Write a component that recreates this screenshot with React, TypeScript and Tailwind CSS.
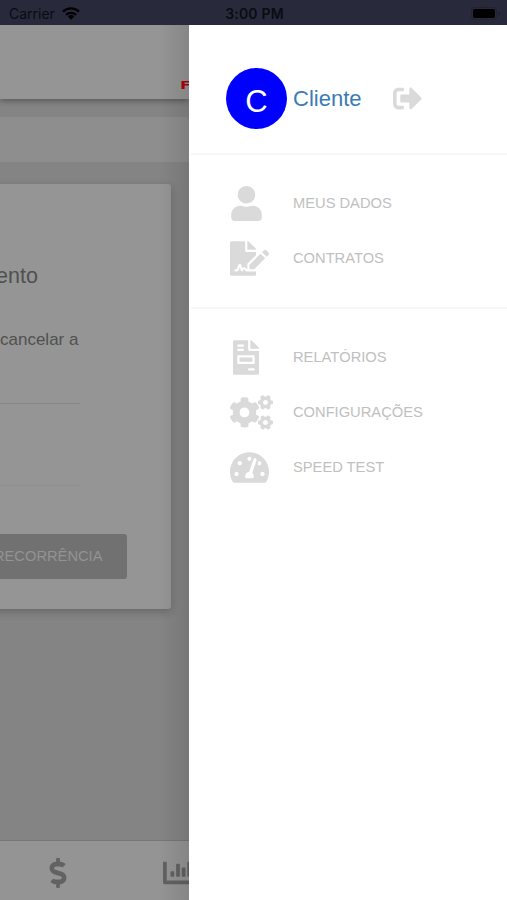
import type { IconType } from "react-icons";
import {
  FaChartBar,
  FaCogs,
  FaDollarSign,
  FaFileInvoice,
  FaFileSignature,
  FaSignOutAlt,
  FaTachometerAlt,
  FaUser,
} from "react-icons/fa";

interface MenuItem {
  label: string;
  icon: IconType;
  iconClass: string;
}

const accountItems: MenuItem[] = [
  { label: "MEUS DADOS", icon: FaUser, iconClass: "ml-px w-[31px]" },
  { label: "CONTRATOS", icon: FaFileSignature, iconClass: "w-[39px]" },
];

const toolItems: MenuItem[] = [
  { label: "RELATÓRIOS", icon: FaFileInvoice, iconClass: "ml-[3px] w-[26px]" },
  { label: "CONFIGURAÇÕES", icon: FaCogs, iconClass: "w-[43px]" },
  { label: "SPEED TEST", icon: FaTachometerAlt, iconClass: "w-[39px]" },
];

function StatusBar() {
  return (
    <header className="grid h-[25px] shrink-0 grid-cols-3 items-center bg-[#28293b] pt-[3px] pl-[9px] pr-[7px] font-['Inter',sans-serif] text-[14px] leading-none text-[#0b0b12]">
      <div className="flex items-center gap-[7px]">
        <span>Carrier</span>
        <svg width="18" height="13" viewBox="0 0 18 13" className="-mt-[2px] text-black">
          <g fill="none" stroke="currentColor" strokeWidth="2.3">
            <path d="M1 4.6a11.4 11.4 0 0 1 16 0" />
            <path d="M4 7.8a7.2 7.2 0 0 1 10 0" />
          </g>
          <path d="M9 12.7 5.8 9.6a4.7 4.7 0 0 1 6.4 0z" fill="currentColor" />
        </svg>
      </div>
      <span className="text-center font-semibold tracking-[0.2px]">3:00 PM</span>
      <svg width="29" height="13" viewBox="0 0 29 13" className="-mt-[2px] justify-self-end">
        <rect x="0.5" y="0.5" width="25" height="12" rx="3" fill="none" stroke="#212130" />
        <rect x="2" y="2" width="22" height="9" rx="1.5" fill="#000" />
        <path d="M27 4.5v4a2 2 0 0 0 0-4z" fill="#212130" />
      </svg>
    </header>
  );
}

function PageBehind() {
  return (
    <main className="relative flex w-[189px] shrink-0 flex-col overflow-hidden bg-[#848484] text-[#505050]">
      <div className="flex h-[74px] shrink-0 items-start justify-end bg-[#959595] pt-[55px] shadow-[0_2px_6px_rgba(0,0,0,0.35)]">
        <span className="w-[9px] origin-left scale-x-150 font-['DejaVu_Sans',sans-serif] text-[11px] leading-[11px] font-bold text-[#b0000d]">
          F
        </span>
      </div>
      <div className="mt-[18px] h-[45px] shrink-0 rounded-tr-sm bg-[#8e8e8e]" />
      <section className="mt-[22px] mr-[18px] -ml-[12px] flex h-[425px] shrink-0 flex-col rounded-r-[3px] bg-[#959595] pl-[12px] shadow-[0_3px_8px_rgba(0,0,0,0.22)]">
        <h2 className="-ml-[4px] mt-[79px] text-[21.5px] leading-[26px]">ento</h2>
        <p className="mt-[41px] text-[17px] leading-[20px]">cancelar a</p>
        <div className="mt-[53px] mr-[91px] border-t border-[#878787]" />
        <div className="mt-[81px] mr-[91px] border-t border-[#8f8f8f]" />
        <div className="mt-[48px] mr-[44px] flex h-[45px] items-center justify-end rounded-r-[3px] bg-[#717171] pr-[24.5px] text-[14.7px] text-[#939393]">
          RECORRÊNCIA
        </div>
      </section>
      <nav className="mt-auto flex h-[60px] shrink-0 items-center border-t border-[#777] bg-[#949494] pt-[4px] text-[#626262]">
        <FaDollarSign size={30} className="ml-[43px] shrink-0" />
        <FaChartBar size={30} className="ml-[90px] shrink-0" />
      </nav>
      <div className="absolute inset-y-0 right-0 w-[30px] bg-linear-to-r from-transparent to-black/10" />
    </main>
  );
}

function MenuRow({ label, icon: Icon, iconClass }: MenuItem) {
  return (
    <li className="flex h-[55px] items-center">
      <div className="w-[63px] shrink-0 text-[#dadada]">
        <Icon className={`h-[35px] ${iconClass}`} />
      </div>
      <span className="text-[14.7px] text-[#c0c0c0]">{label}</span>
    </li>
  );
}

function Drawer() {
  return (
    <aside className="flex flex-1 flex-col bg-white pl-[2px]">
      <div className="flex h-[130px] items-center border-b-2 border-[#f6f6f6] pt-[19px] pl-[35px]">
        <div className="flex size-[61px] items-center justify-center rounded-full bg-[#0000ff] pt-[7px] text-[31px] text-white">
          C
        </div>
        <span className="ml-[6px] text-[22px] text-[#3b7cb5]">Cliente</span>
        <FaSignOutAlt size={29} className="ml-[32px] text-[#dadada]" />
      </div>
      <ul className="border-b-2 border-[#f6f6f6] pt-[21px] pb-[21px] pl-[39px]">
        {accountItems.map((item) => (
          <MenuRow key={item.label} {...item} />
        ))}
      </ul>
      <ul className="pt-[21px] pl-[39px]">
        {toolItems.map((item) => (
          <MenuRow key={item.label} {...item} />
        ))}
      </ul>
    </aside>
  );
}

export default function App() {
  return (
    <div className="flex h-[900px] w-[507px] flex-col overflow-hidden font-['Liberation_Sans',Arial,sans-serif]">
      <StatusBar />
      <div className="flex min-h-0 flex-1">
        <PageBehind />
        <Drawer />
      </div>
    </div>
  );
}
